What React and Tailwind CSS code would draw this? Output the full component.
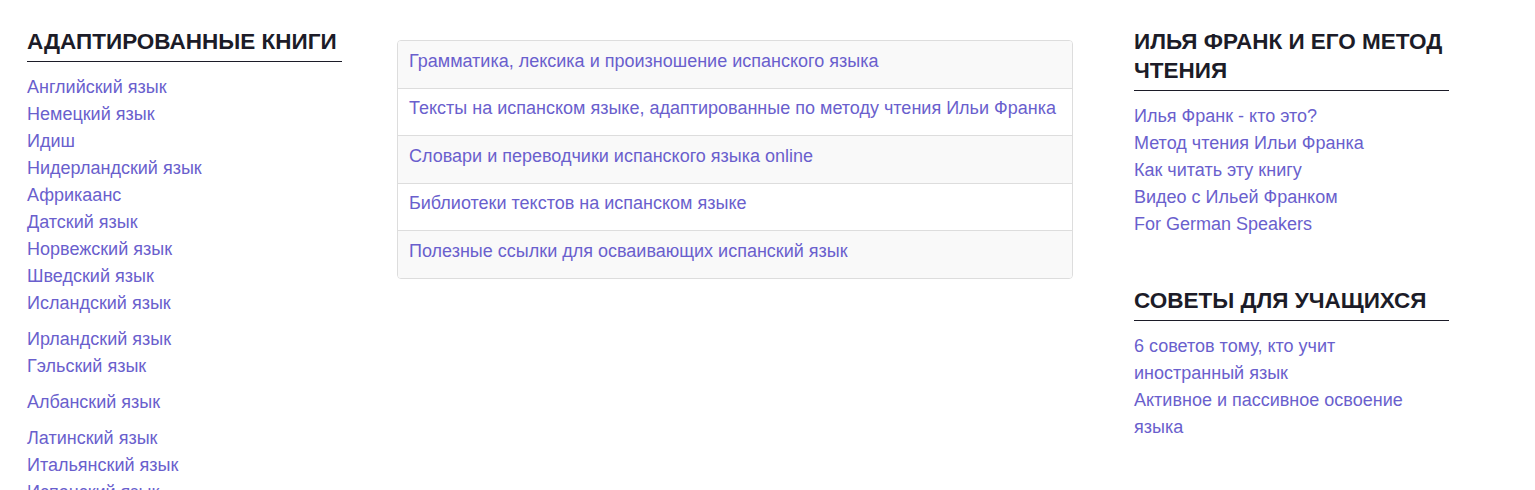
import React from 'react';

const groups = [
  ['Английский язык', 'Немецкий язык', 'Идиш', 'Нидерландский язык', 'Африкаанс', 'Датский язык', 'Норвежский язык', 'Шведский язык', 'Исландский язык'],
  ['Ирландский язык', 'Гэльский язык'],
  ['Албанский язык'],
  ['Латинский язык', 'Итальянский язык', 'Испанский язык', 'Португальский язык', 'Французский язык'],
];

const panelLinks = [
  'Грамматика, лексика и произношение испанского языка',
  'Тексты на испанском языке, адаптированные по методу чтения Ильи Франка',
  'Словари и переводчики испанского языка online',
  'Библиотеки текстов на испанском языке',
  'Полезные ссылки для осваивающих испанский язык',
];

const frankLinks = ['Илья Франк - кто это?', 'Метод чтения Ильи Франка', 'Как читать эту книгу', 'Видео с Ильей Франком', 'For German Speakers'];
const tipsLinks = ['6 советов тому, кто учит иностранный язык', 'Активное и пассивное освоение языка'];

const Heading = ({ children }) => (
  <h2 className="text-[22.5px] leading-[29px] font-bold uppercase text-[#1c1c28] pb-[5px] border-b border-[#1c1c28]">
    {children}
  </h2>
);

const LinkItem = ({ children }) => (
  <li className="text-[18px] leading-[27px]">
    <a href="#" className="text-[#6a5fcd]">{children}</a>
  </li>
);

export default function App() {
  return (
    <div className="h-[490px] overflow-hidden bg-white font-['Liberation_Sans',Arial,sans-serif]">
      <div className="flex items-start pl-[27px] pt-[27px]">
        {/* Left sidebar */}
        <div className="w-[315px] shrink-0">
          <Heading>Адаптированные книги</Heading>
          <div className="mt-[12px] flex flex-col gap-[9px]">
            {groups.map((g, i) => (
              <ul key={i}>
                {g.map((l) => (
                  <LinkItem key={l}>{l}</LinkItem>
                ))}
              </ul>
            ))}
          </div>
        </div>

        {/* Middle list group */}
        <div className="ml-[55px] mt-[13px] w-[676px] shrink-0 border border-[#ddd] rounded-[4px] overflow-hidden">
          {panelLinks.map((l, i) => (
            <div
              key={l}
              className={`px-[11px] pt-[7.5px] pb-[15px] text-[18px] leading-[24px] ${i > 0 ? 'border-t border-[#ddd]' : ''} ${i % 2 === 0 ? 'bg-[#f9f9f9]' : 'bg-white'}`}
            >
              <a href="#" className="text-[#6a5fcd]">{l}</a>
            </div>
          ))}
        </div>

        {/* Right sidebar */}
        <div className="ml-[61px] w-[315px] shrink-0">
          <Heading>Илья Франк и его метод чтения</Heading>
          <ul className="mt-[12px]">
            {frankLinks.map((l) => (
              <LinkItem key={l}>{l}</LinkItem>
            ))}
          </ul>
          <div className="mt-[48px]">
            <Heading>Советы для учащихся</Heading>
            <ul className="mt-[12px]">
              {tipsLinks.map((l) => (
                <LinkItem key={l}>{l}</LinkItem>
              ))}
            </ul>
          </div>
        </div>
      </div>
    </div>
  );
}
